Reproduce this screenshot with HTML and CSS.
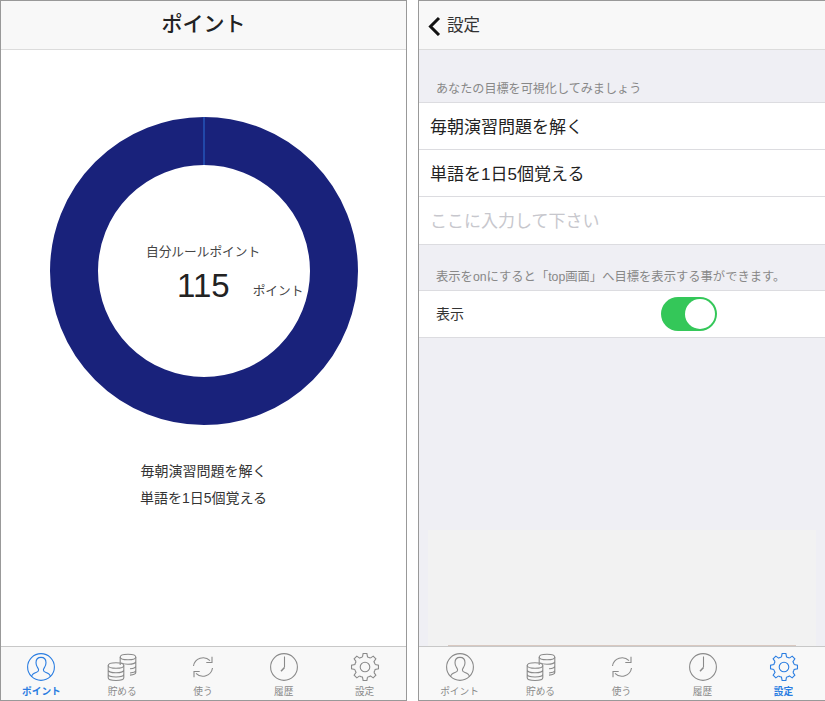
FILE: index.html
```html
<!DOCTYPE html>
<html lang="ja">
<head>
  <meta charset="UTF-8" />
  <meta name="viewport" content="width=device-width, initial-scale=1.0"/>
  <title>ポイント</title>
  <link rel="stylesheet" href="styles.css">
</head>
<body>
  <!-- tab icons -->
  <svg class="defs" width="0" height="0">
    <symbol id="i-person" viewBox="0 0 30 30">
      <circle cx="15" cy="15" r="13.4"/>
      <path d="M5.500 24.800c.5-2.700 2-3.500 4.500-4.300 1.800-.6 2.600-1.300 2.600-2.600 0-.9-.6-1.500-1.200-2.600C10.600 14 10 12.500 10 10.800 10 7.500 12 5.400 15 5.400s5 2.100 5 5.400c0 1.700-.6 3.200-1.400 4.500-.6 1.100-1.200 1.700-1.200 2.600 0 1.300.8 2 2.600 2.600 2.500.8 4 1.600 4.500 4.300"/>
    </symbol>
    <symbol id="i-coins" viewBox="0 0 30 30">
      <ellipse cx="21" cy="5" rx="7.800" ry="2.800"/>
      <path d="M13.200 5v8M28.800 5v15.500c0 1.300-2 2.300-5.800 2.600M28.800 9.500c0 1.500-3.500 2.800-7.800 2.800-2.800 0-5.300-.5-6.800-1.400M28.800 14c0 1.400-2.400 2.500-5.800 2.800M28.800 18.300c0 1.300-2.400 2.400-5.800 2.700"/>
      <ellipse cx="9" cy="13.500" rx="7.800" ry="2.800"/>
      <path d="M1.200 13.500v12.300c0 1.500 3.500 2.700 7.800 2.700s7.800-1.200 7.800-2.700V13.500M1.200 18c0 1.500 3.500 2.800 7.800 2.800s7.800-1.300 7.800-2.800M1.200 22.300c0 1.500 3.500 2.700 7.800 2.700s7.800-1.200 7.800-2.700"/>
    </symbol>
    <symbol id="i-sync" viewBox="0 0 30 30">
      <path d="M5.500 14A9.700 9.700 0 0 1 22 8.700M24 4.800v5.700h-5.700"/>
      <path d="M24.500 16A9.700 9.700 0 0 1 8 21.300M6 25.200v-5.700h5.700"/>
    </symbol>
    <symbol id="i-clock" viewBox="0 0 30 30">
      <circle cx="15" cy="15" r="13.400"/>
      <path d="M15.500 15.500V4.500"/>
      <path class="thick" d="M15.500 15.500l-3.500 3.700"/>
    </symbol>
    <symbol id="i-gear" viewBox="0 0 30 30">
      <circle cx="15" cy="15" r="4.800"/>
      <path d="M12.480 4.910L13.110 1.530H16.890L17.520 4.910A10.400 10.400 0 0 1 20.360 6.090"/>
      <path transform="rotate(45 15 15)" d="M12.480 4.910L13.110 1.530H16.890L17.520 4.910A10.400 10.400 0 0 1 20.360 6.090"/>
      <path transform="rotate(90 15 15)" d="M12.480 4.910L13.110 1.530H16.890L17.520 4.910A10.400 10.400 0 0 1 20.360 6.090"/>
      <path transform="rotate(135 15 15)" d="M12.480 4.910L13.110 1.530H16.890L17.520 4.910A10.400 10.400 0 0 1 20.360 6.090"/>
      <path transform="rotate(180 15 15)" d="M12.480 4.910L13.110 1.530H16.890L17.520 4.910A10.400 10.400 0 0 1 20.360 6.090"/>
      <path transform="rotate(225 15 15)" d="M12.480 4.910L13.110 1.530H16.890L17.520 4.910A10.400 10.400 0 0 1 20.360 6.090"/>
      <path transform="rotate(270 15 15)" d="M12.480 4.910L13.110 1.530H16.890L17.520 4.910A10.400 10.400 0 0 1 20.360 6.090"/>
      <path transform="rotate(315 15 15)" d="M12.480 4.910L13.110 1.530H16.890L17.520 4.910A10.400 10.400 0 0 1 20.360 6.090"/>
    </symbol>
  </svg>

  <div class="screens">
    <!-- point screen -->
    <section class="screen">
      <header class="navbar navbar-center">
        <h1 class="nav-title">ポイント</h1>
      </header>
      <main class="point-main">
        <div class="donut">
          <svg class="donut-ring" width="308" height="308" viewBox="0 0 308 308">
            <circle cx="154" cy="154" r="130" fill="none" stroke="#19227b" stroke-width="48"/>
            <line x1="154" y1="0" x2="154" y2="48" stroke="#2b6fd8" stroke-width="1"/>
          </svg>
          <div class="donut-text">
            <div class="donut-label">自分ルールポイント</div>
            <div class="donut-value">
              <span class="donut-number">115</span>
              <span class="donut-unit">ポイント</span>
            </div>
          </div>
        </div>
        <ul class="goals">
          <li>毎朝演習問題を解く</li>
          <li>単語を1日5個覚える</li>
        </ul>
      </main>
      <nav class="tabbar">
        <a class="tab active"><svg class="tab-icon"><use href="#i-person"/></svg><span>ポイント</span></a>
        <a class="tab"><svg class="tab-icon"><use href="#i-coins"/></svg><span>貯める</span></a>
        <a class="tab"><svg class="tab-icon"><use href="#i-sync"/></svg><span>使う</span></a>
        <a class="tab"><svg class="tab-icon"><use href="#i-clock"/></svg><span>履歴</span></a>
        <a class="tab"><svg class="tab-icon"><use href="#i-gear"/></svg><span>設定</span></a>
      </nav>
    </section>

    <!-- settings screen -->
    <section class="screen">
      <header class="navbar">
        <svg class="back" width="14" height="20" viewBox="0 0 14 20"><path d="M12 2L3.500 10.500 12 19"/></svg>
        <span class="nav-back-label">設定</span>
      </header>
      <main class="settings-main">
        <p class="caption caption-first">あなたの目標を可視化してみましょう</p>
        <div class="group">
          <div class="row row-goal">毎朝演習問題を解く</div>
          <div class="row row-goal">単語を1日5個覚える</div>
          <div class="row row-goal row-last placeholder">ここに入力して下さい</div>
        </div>
        <p class="caption caption-second">表示をonにすると「top画面」へ目標を表示する事ができます。</p>
        <div class="group">
          <div class="row row-switch">
            <span class="switch-label">表示</span>
            <span class="switch"><span class="knob"></span></span>
          </div>
        </div>
        <div class="ad"><div class="ad-edge"></div></div>
      </main>
      <nav class="tabbar">
        <a class="tab"><svg class="tab-icon"><use href="#i-person"/></svg><span>ポイント</span></a>
        <a class="tab"><svg class="tab-icon"><use href="#i-coins"/></svg><span>貯める</span></a>
        <a class="tab"><svg class="tab-icon"><use href="#i-sync"/></svg><span>使う</span></a>
        <a class="tab"><svg class="tab-icon"><use href="#i-clock"/></svg><span>履歴</span></a>
        <a class="tab active"><svg class="tab-icon"><use href="#i-gear"/></svg><span>設定</span></a>
      </nav>
    </section>
  </div>
</body>
</html>
```

FILE: styles.css
```css
body {
  margin: 0;
  background: #fff;
  font-family: "Liberation Sans", "Noto Sans CJK JP", sans-serif;
  color: #222;
}
.defs {
  position: absolute;
}
.screens {
  display: flex;
  gap: 11px;
  width: 825px;
  height: 701px;
}
.screen {
  width: 407px;
  height: 701px;
  box-sizing: border-box;
  border: 1px solid #999;
  display: flex;
  flex-direction: column;
  background: #fff;
}
.screen + .screen {
  border-right: none;
}

/* nav bar */
.navbar {
  height: 48px;
  flex: none;
  background: #f8f8f8;
  border-bottom: 1px solid #dcdcdc;
  display: flex;
  align-items: center;
}
.navbar-center {
  justify-content: center;
}
.nav-title {
  margin: 0 0 6px;
  font-size: 21px;
  font-weight: 500;
  color: #222;
}
.back {
  margin: 2px 0 0 8px;
  fill: none;
  stroke: #111;
  stroke-width: 3;
}
.nav-back-label {
  margin: 0 0 2px 6px;
  font-size: 16.500px;
  color: #333;
}

/* point screen */
.point-main {
  flex: 1;
  padding-top: 67px;
}
.donut {
  position: relative;
  width: 308px;
  height: 308px;
  margin-left: 49px;
}
.donut-ring {
  display: block;
}
.donut-text {
  position: absolute;
  top: 125px;
  left: 96px;
}
.donut-label {
  font-size: 12.700px;
  line-height: 20px;
  color: #444;
}
.donut-value {
  display: flex;
  align-items: flex-end;
  margin-top: 5px;
  margin-left: 31px;
}
.donut-number {
  font-size: 33px;
  line-height: 38px;
  color: #222;
}
.donut-unit {
  margin-left: 23px;
  font-size: 12.700px;
  line-height: 27px;
  color: #444;
  white-space: nowrap;
}
.goals {
  list-style: none;
  margin: 33px 0 0;
  padding: 0;
  text-align: center;
  font-size: 14px;
  line-height: 27px;
  color: #333;
}

/* settings screen */
.settings-main {
  flex: 1;
  background: #efeff4;
  display: flex;
  flex-direction: column;
}
.caption {
  margin: 0;
  padding-left: 17px;
  font-size: 12.100px;
  line-height: 17px;
  color: #888;
}
.caption-first {
  padding-top: 31px;
  padding-bottom: 4px;
}
.caption-second {
  padding-top: 24px;
  padding-bottom: 4px;
  font-size: 12.300px;
}
.group {
  background: #fff;
  border-top: 1px solid #dcdce0;
}
.row {
  box-sizing: border-box;
  height: 47px;
  border-bottom: 1px solid #dcdce0;
  display: flex;
  align-items: center;
}
.row-goal {
  padding: 0 0 2px 11px;
  font-size: 17px;
  color: #222;
}
.row-last {
  height: 48px;
}
.placeholder {
  color: #c7c7cd;
}
.row-switch {
  padding-left: 17px;
}
.switch-label {
  margin-bottom: 2px;
  font-size: 14px;
  color: #333;
}
.switch {
  box-sizing: border-box;
  margin-left: 197px;
  width: 56px;
  height: 34px;
  border-radius: 17px;
  background: #34c759;
  padding: 2px;
  display: flex;
  justify-content: flex-end;
}
.knob {
  width: 30px;
  height: 30px;
  border-radius: 50%;
  background: #fff;
}
.ad {
  margin: auto 9px 0;
  height: 116px;
  background: #f2f2f2;
  display: flex;
  flex-direction: column;
  justify-content: flex-end;
}
.ad-edge {
  height: 1px;
  margin: 0 20px;
  background: #d8c8c0;
}

/* tab bar */
.tabbar {
  height: 54px;
  flex: none;
  box-sizing: border-box;
  padding-right: 1px;
  background: #f8f8f8;
  border-top: 1px solid #c8c8c8;
  display: flex;
}
.tab {
  flex: 1;
  display: flex;
  flex-direction: column;
  align-items: center;
  padding-top: 5px;
  font-size: 9.700px;
  color: #8a8a8a;
}
.tab span {
  margin-top: 3px;
  line-height: 13px;
}
.tab-icon {
  width: 30px;
  height: 30px;
  fill: none;
  stroke: #8a8a8a;
  stroke-width: 1.100;
}
.thick {
  stroke-width: 1.500;
}
.tab.active {
  color: #2a7de1;
  font-weight: 700;
}
.tab.active .tab-icon {
  stroke: #2a7de1;
}
```
